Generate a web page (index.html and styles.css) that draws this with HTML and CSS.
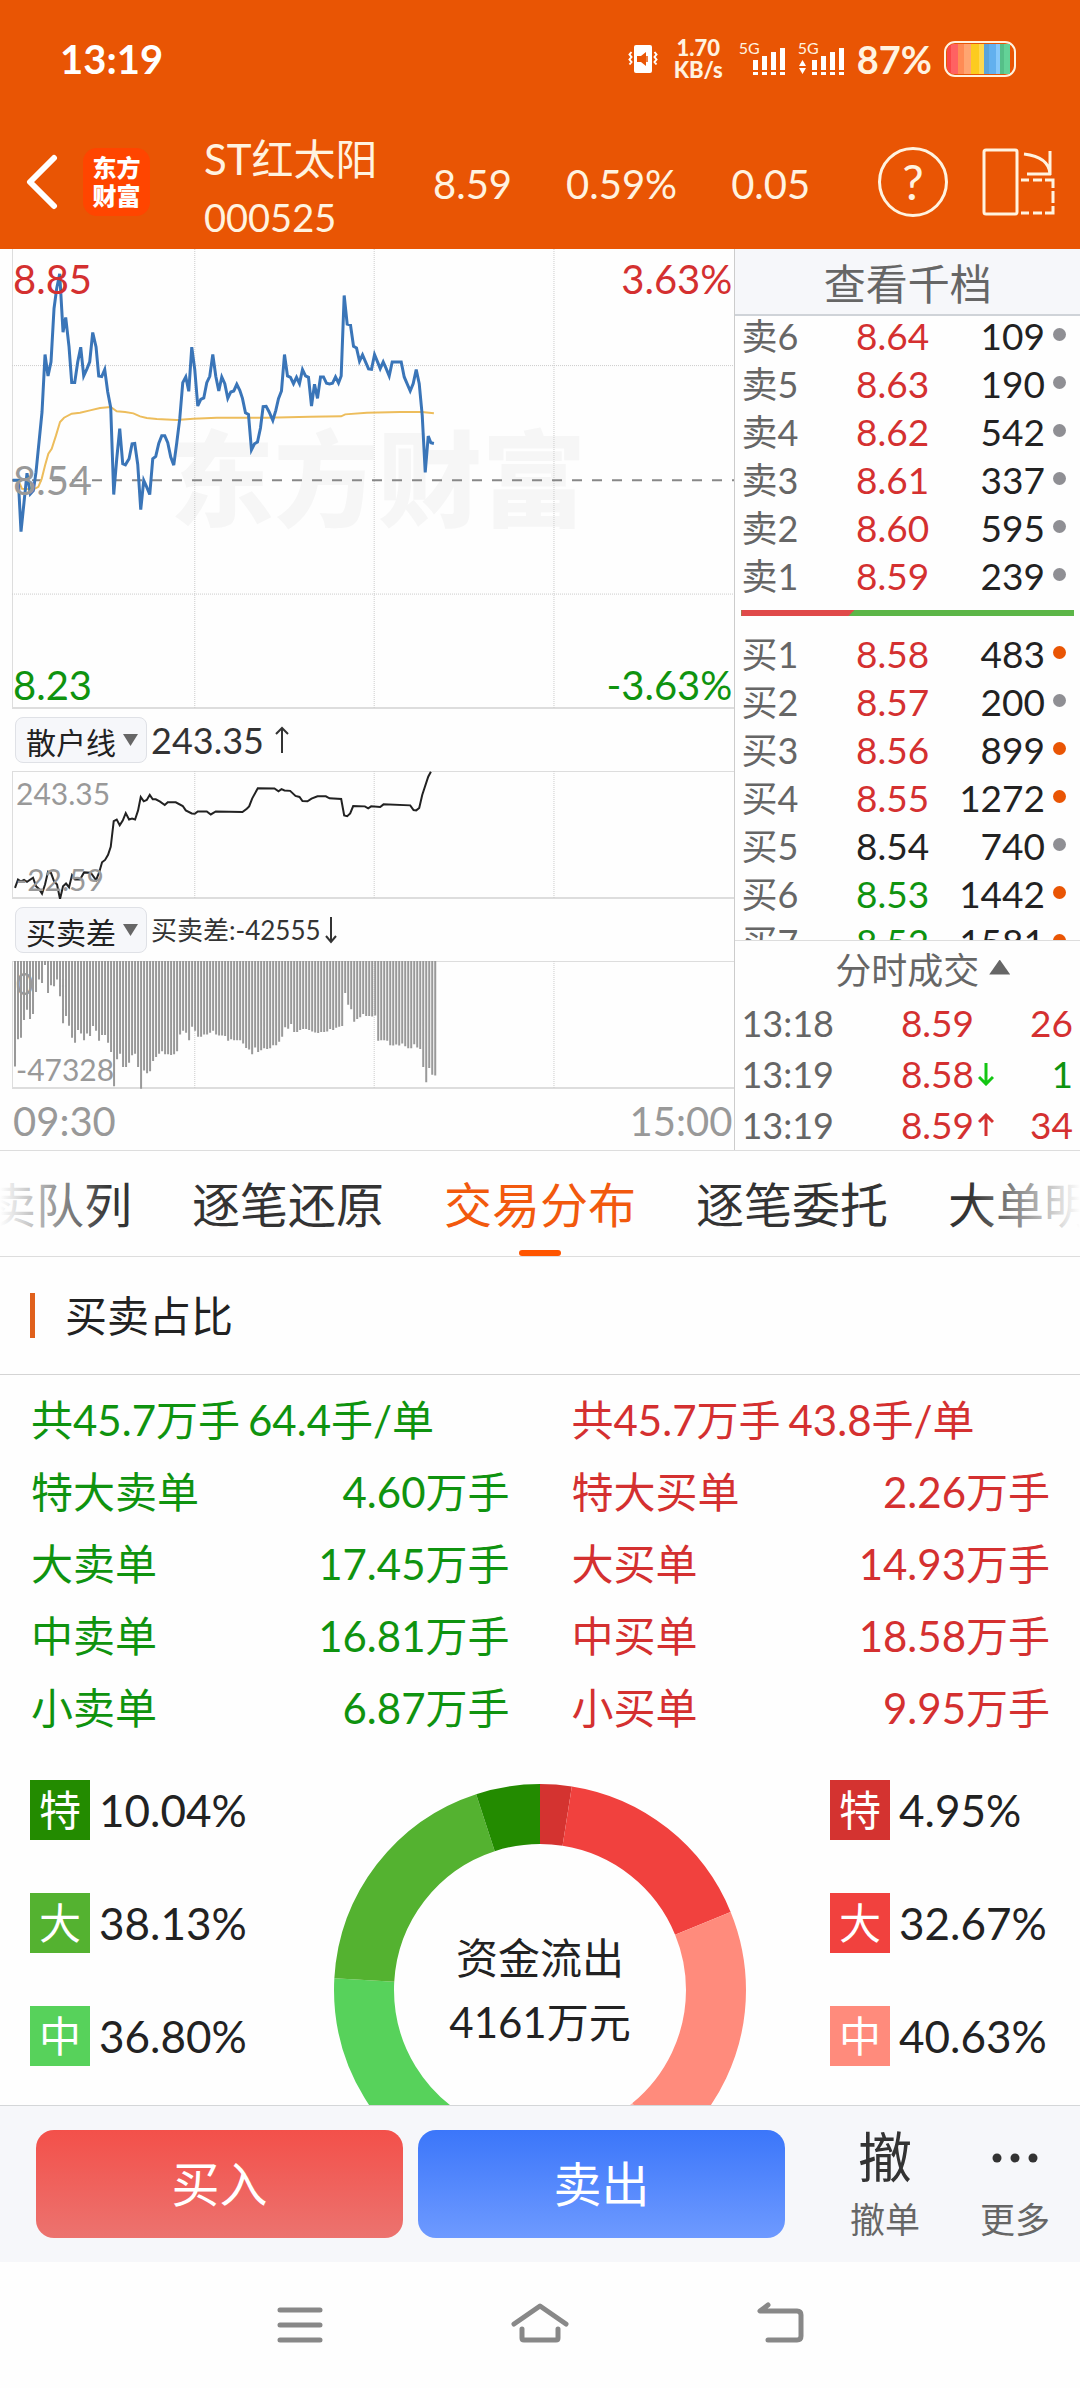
FILE: index.html
```html
<!DOCTYPE html>
<html lang="zh-CN">
<head>
<meta charset="utf-8">
<meta name="viewport" content="width=device-width, initial-scale=1">
<title>ST红太阳 000525</title>
<link rel="stylesheet" href="styles.css">
</head>

<body>
<header class="top">
  <div class="status">
    <span class="clock">13:19</span>
    <div class="status-icons">
      <svg class="vibrate" width="30" height="28" viewBox="0 0 30 28">
        <rect x="6" y="0" width="18" height="28" rx="2" fill="#fff"/>
        <path d="M9 11h4l5-4v14l-5-4h-4z" fill="#e95504"/>
        <path d="M19 11v6" stroke="#e95504" stroke-width="1.5"/>
        <path d="M3.500 7l-2 2.500 2 2.500-2 2.500 2 2.500-2 2.500M26.500 7l2 2.500-2 2.500 2 2.500-2 2.500 2 2.500" fill="none" stroke="#fff" stroke-width="2"/>
      </svg>
      <span class="speed">1.70<br>KB/s</span>
      <span class="signal">
        <span class="net">5G</span>
        <svg width="46" height="34" viewBox="0 0 46 34" fill="#fff">
          <path d="M14 18h5v10h-5zM23 14h5v14h-5zM32 10h5v18h-5zM41 6h5v22h-5zM14 30h5v3h-5zM23 30h5v3h-5zM32 30h5v3h-5zM41 30h5v3h-5z"/>
        </svg>
      </span>
      <span class="signal">
        <span class="net">5G</span>
        <svg width="46" height="34" viewBox="0 0 46 34" fill="#fff">
          <path d="M14 18h5v10h-5zM23 14h5v14h-5zM32 10h5v18h-5zM41 6h5v22h-5zM14 30h5v3h-5zM23 30h5v3h-5zM32 30h5v3h-5zM41 30h5v3h-5z"/>
          <path d="M4.500 18l3.500 6h-7zM4.500 32l3.500-6h-7z"/>
        </svg>
      </span>
      <span class="percent">87%</span>
      <span class="battery"><span class="charge"></span></span>
    </div>
  </div>

  <div class="titlebar">
    <button class="icon-btn" aria-label="返回">
      <svg width="32" height="56" viewBox="0 0 32 56" fill="none" stroke="#fff" stroke-width="6" stroke-linecap="round" stroke-linejoin="round"><path d="M28 4L4 28l24 24"/></svg>
    </button>
    <span class="logo">东方<br>财富</span>
    <div class="stock">
      <h1>ST红太阳</h1>
      <span>000525</span>
    </div>
    <div class="quote">
      <span>8.59</span>
      <span>0.59%</span>
      <span>0.05</span>
    </div>
    <div class="actions">
      <button class="icon-btn help" aria-label="帮助">?</button>
      <button class="icon-btn" aria-label="横屏">
        <svg width="73" height="70" viewBox="0 0 73 70" fill="none" stroke="#fff3e0" stroke-width="3">
          <rect x="2" y="3" width="33" height="64" rx="2"/>
          <path d="M42 7q25 3 26 20M68 4v24M45 27h24"/>
          <path d="M39 33h8M51 33h9M63 33h8v8M71 44v12M71 59v7h-8M60 66h-9M47 66h-8"/>
        </svg>
      </button>
    </div>
  </div>
</header>

<main class="market">
  <section class="charts">
    <div class="plot price">
      <span class="watermark">东方财富</span>
      <svg viewBox="0 12 2202 1377" preserveAspectRatio="none">
        <g class="grid">
          <path d="M36 361H2202M36 1045H2202"/>
          <path d="M584 12V1389M1122 12V1389M1661 12V1389"/>
        </g>
        <path class="base" d="M36 704H2202"/>
        <polyline class="avg" points="38,704 55,704 66,730 100,732 115,724 125,700 135,660 145,625 155,610 168,570 180,530 192,517 215,505 240,502 270,495 300,488 332,485 350,498 375,500 400,504 420,513 440,518 470,521 530,524 580,520 650,517 800,517 930,514 1023,513 1035,507 1100,502 1200,500 1265,500 1301,504"/>
        <polyline class="now" points="38,704 55,704 63,858 81,683 91,745 100,735 108,680 126,500 135,328 144,392 153,350 162,190 170,130 179,86 189,261 197,217 207,305 215,412 224,412 233,350 242,306 251,392 261,370 269,350 278,262 288,305 296,392 305,394 314,373 323,440 332,487 341,747 350,640 359,550 368,655 376,658 387,640 396,595 404,594 413,657 422,792 431,705 440,725 449,747 458,640 467,633 476,594 485,571 494,571 503,592 512,635 521,659 530,592 539,520 548,412 557,395 566,438 575,306 584,373 593,482 602,462 611,458 620,412 629,393 638,328 647,393 656,437 665,395 674,415 683,459 692,440 701,437 710,417 719,435 727,459 736,502 745,507 754,613 763,595 772,590 781,548 789,484 798,483 807,500 818,525 827,495 835,460 844,437 853,328 862,392 871,396 880,415 889,396 898,415 907,373 916,392 925,396 934,482 943,417 952,459 961,395 970,395 979,414 988,416 997,414 1006,395 1015,413 1023,392 1032,151 1041,237 1051,240 1060,303 1069,308 1078,348 1087,329 1096,350 1105,371 1114,372 1123,328 1132,350 1140,370 1149,350 1158,370 1167,392 1176,350 1203,350 1212,395 1230,437 1239,415 1248,373 1257,415 1266,510 1275,681 1284,572 1292,592 1301,594"/>
      </svg>
      <span class="mark top-left up">8.85</span>
      <span class="mark top-right up">3.63%</span>
      <span class="mark mid-left">8.54</span>
      <span class="mark bottom-left down">8.23</span>
      <span class="mark bottom-right down">-3.63%</span>
    </div>

    <div class="indicator">
      <span class="picker"><select aria-label="指标一"><option>散户线</option></select></span>
      <span class="reading">243.35<svg width="16" height="28" viewBox="0 0 16 28"><path d="M8 27V2M2 8l6-6 6 6"/></svg></span>
    </div>
    <div class="plot sub">
      <svg viewBox="0 213 2202 380" preserveAspectRatio="none">
        <g class="grid"><path d="M584 213V593M1122 213V593M1661 213V593"/></g>
        <polyline class="retail" points="45,560 54,535 63,541 72,536 81,542 99,530 108,555 117,563 126,577 135,550 144,512 153,516 162,540 171,550 180,593 189,555 198,547 207,558 216,522 225,535 240,535 252,514 272,515 288,537 297,515 306,484 315,477 324,462 332,438 341,362 350,357 359,374 368,360 377,338 387,357 396,354 405,357 414,330 422,290 431,303 440,299 449,284 458,297 467,297 480,304 494,314 503,306 527,306 548,317 557,330 575,339 584,340 593,333 620,333 632,342 647,333 727,335 740,325 747,318 756,295 773,264 823,265 835,273 844,267 853,271 870,272 886,287 898,290 907,302 922,303 934,295 952,288 977,288 988,294 1023,296 1032,345 1041,347 1050,339 1059,317 1094,318 1104,324 1113,318 1140,320 1150,312 1230,315 1240,329 1248,330 1257,323 1266,284 1284,230 1292,215"/>
      </svg>
      <span class="mark small top-left">243.35</span>
      <span class="mark small bottom-left">-22.59</span>
    </div>

    <div class="indicator">
      <span class="picker"><select aria-label="指标二"><option>买卖差</option></select></span>
      <span class="reading narrow">买卖差:-42555<svg width="12" height="28" viewBox="0 0 12 28"><path d="M6 1v25M1 20l5 6 5-6"/></svg></span>
    </div>
    <div class="plot sub">
      <svg viewBox="0 785 2202 380" preserveAspectRatio="none">
        <g class="grid"><path d="M584 785V1165M1122 785V1165M1661 785V1165"/></g>
        <path class="bars" id="bars"/>
      </svg>
      <span class="mark small top-left">0</span>
      <span class="mark small bottom-left">-47328</span>
    </div>
    <div class="axis"><span>09:30</span><span>15:00</span></div>
  </section>

  <aside class="book">
    <button class="depth">查看千档</button>
    <div class="levels">
      <table>
        <tr><th>卖6</th><td class="up">8.64</td><td>109</td><td><i></i></td></tr>
        <tr><th>卖5</th><td class="up">8.63</td><td>190</td><td><i></i></td></tr>
        <tr><th>卖4</th><td class="up">8.62</td><td>542</td><td><i></i></td></tr>
        <tr><th>卖3</th><td class="up">8.61</td><td>337</td><td><i></i></td></tr>
        <tr><th>卖2</th><td class="up">8.60</td><td>595</td><td><i></i></td></tr>
        <tr><th>卖1</th><td class="up">8.59</td><td>239</td><td><i></i></td></tr>
      </table>
      <div class="balance"><span style="width: 34%"></span></div>
      <table>
        <tr><th>买1</th><td class="up">8.58</td><td>483</td><td><i class="hot"></i></td></tr>
        <tr><th>买2</th><td class="up">8.57</td><td>200</td><td><i></i></td></tr>
        <tr><th>买3</th><td class="up">8.56</td><td>899</td><td><i class="hot"></i></td></tr>
        <tr><th>买4</th><td class="up">8.55</td><td>1272</td><td><i class="hot"></i></td></tr>
        <tr><th>买5</th><td>8.54</td><td>740</td><td><i></i></td></tr>
        <tr><th>买6</th><td class="down">8.53</td><td>1442</td><td><i class="hot"></i></td></tr>
        <tr><th>买7</th><td class="down">8.52</td><td>1581</td><td><i class="hot"></i></td></tr>
      </table>
    </div>
    <div class="trades">
      <button class="trades-head">分时成交<span class="caret"></span></button>
      <table>
        <tr><th>13:18</th><td class="up">8.59</td><td class="arrow"></td><td class="up">26</td></tr>
        <tr><th>13:19</th><td class="up">8.58</td><td class="arrow fall"><svg width="16" height="24" viewBox="0 0 16 24"><path d="M8 1v20M1 15l7 7 7-7"/></svg></td><td class="down">1</td></tr>
        <tr><th>13:19</th><td class="up">8.59</td><td class="arrow rise"><svg width="16" height="24" viewBox="0 0 16 24"><path d="M8 23V3M1 9l7-7 7 7"/></svg></td><td class="up">34</td></tr>
      </table>
    </div>
  </aside>
</main>

<nav class="tabs">
  <a href="#">买卖队列</a>
  <a href="#">逐笔还原</a>
  <a href="#" class="active">交易分布</a>
  <a href="#">逐笔委托</a>
  <a href="#">大单明细</a>
</nav>

<section class="ratio">
  <h2>买卖占比</h2>
  <div class="totals">
    <dl class="down">
      <div class="sum"><dt>共45.7万手</dt><dd>64.4手/单</dd></div>
      <div><dt>特大卖单</dt><dd>4.60万手</dd></div>
      <div><dt>大卖单</dt><dd>17.45万手</dd></div>
      <div><dt>中卖单</dt><dd>16.81万手</dd></div>
      <div><dt>小卖单</dt><dd>6.87万手</dd></div>
    </dl>
    <dl class="up">
      <div class="sum"><dt>共45.7万手</dt><dd>43.8手/单</dd></div>
      <div><dt>特大买单</dt><dd>2.26万手</dd></div>
      <div><dt>大买单</dt><dd>14.93万手</dd></div>
      <div><dt>中买单</dt><dd>18.58万手</dd></div>
      <div><dt>小买单</dt><dd>9.95万手</dd></div>
    </dl>
  </div>

  <div class="share">
    <ul class="legend">
      <li><b class="g1">特</b>10.04%</li>
      <li><b class="g2">大</b>38.13%</li>
      <li><b class="g3">中</b>36.80%</li>
    </ul>
    <div class="donut">
      <!-- pathLength 200: each side of the ring adds up to 100% -->
      <svg width="412" height="412" viewBox="0 0 412 412">
        <g fill="none" stroke-width="60" transform="rotate(-90 206 206)">
          <circle cx="206" cy="206" r="176" pathLength="200" stroke="#d43330" stroke-dasharray="4.95 200"/>
          <circle cx="206" cy="206" r="176" pathLength="200" stroke="#f1413e" stroke-dasharray="32.67 200" stroke-dashoffset="-4.95"/>
          <circle cx="206" cy="206" r="176" pathLength="200" stroke="#ff8b7c" stroke-dasharray="40.63 200" stroke-dashoffset="-37.62"/>
          <circle cx="206" cy="206" r="176" pathLength="200" stroke="#ffb9ae" stroke-dasharray="21.75 200" stroke-dashoffset="-78.25"/>
          <circle cx="206" cy="206" r="176" pathLength="200" stroke="#9be79c" stroke-dasharray="15.03 200" stroke-dashoffset="-100"/>
          <circle cx="206" cy="206" r="176" pathLength="200" stroke="#57d25b" stroke-dasharray="36.8 200" stroke-dashoffset="-115.03"/>
          <circle cx="206" cy="206" r="176" pathLength="200" stroke="#54b230" stroke-dasharray="38.13 200" stroke-dashoffset="-151.83"/>
          <circle cx="206" cy="206" r="176" pathLength="200" stroke="#238b00" stroke-dasharray="10.04 200" stroke-dashoffset="-189.96"/>
        </g>
      </svg>
      <p>资金流出<br>4161万元</p>
    </div>
    <ul class="legend">
      <li><b class="r1">特</b>4.95%</li>
      <li><b class="r2">大</b>32.67%</li>
      <li><b class="r3">中</b>40.63%</li>
    </ul>
  </div>
</section>

<footer class="trade-bar">
  <button class="buy">买入</button>
  <button class="sell">卖出</button>
  <button class="tool"><span class="glyph">撤</span>撤单</button>
  <button class="tool"><span class="glyph"><svg width="48" height="12" viewBox="0 0 48 12" fill="#333"><circle cx="6" cy="6" r="4.500"/><circle cx="24" cy="6" r="4.500"/><circle cx="42" cy="6" r="4.500"/></svg></span>更多</button>
</footer>

<nav class="system">
  <button class="icon-btn" aria-label="最近任务">
    <svg width="60" height="48" viewBox="0 0 60 48"><path d="M10 9h40M10 24h40M10 39h40"/></svg>
  </button>
  <button class="icon-btn" aria-label="主屏幕">
    <svg width="60" height="48" viewBox="0 0 60 48"><path d="M4 23L30 5l26 18" /><path d="M12 28v9q0 2 2 2h32q2 0 2-2v-9"/></svg>
  </button>
  <button class="icon-btn" aria-label="返回上级">
    <svg width="60" height="48" viewBox="0 0 60 48"><path d="M18 4l-8 6h37q4 0 4 4v21q0 4-4 4H18"/></svg>
  </button>
</nav>

<script src="bars.js"></script>
</body>
</html>
```

FILE: styles.css
```css
* {
  box-sizing: border-box;
}

body {
  margin: 0;
  height: 100vh;
  display: flex;
  flex-direction: column;
  background: #fefefe;
  color: #222;
  font-family: Lato, "Noto Sans CJK SC", sans-serif;
  font-size: 42px;
  line-height: 48px;
}

button,
select {
  font: inherit;
  color: inherit;
  border: 0;
  padding: 0;
  background: none;
}

h1, h2, p, dl, dd, ul {
  margin: 0;
  padding: 0;
  font-weight: normal;
}

table {
  width: 100%;
  border-collapse: collapse;
}

th, td {
  padding: 0;
  font-weight: normal;
}

.up { color: #d43030; }
.down { color: #0f930f; }

.icon-btn {
  display: flex;
  align-items: center;
  justify-content: center;
}

/* header */

.top {
  flex: none;
  height: 249px;
  background: #e95504;
  color: #fff3e0;
}

.status {
  display: flex;
  align-items: center;
  justify-content: space-between;
  height: 118px;
  padding: 0 64px 0 60px;
}

.clock {
  color: #fff;
  font-size: 40px;
  font-weight: bold;
}

.status-icons {
  display: flex;
  align-items: center;
}

.speed {
  margin: 0 16px 0 16px;
  font-size: 22px;
  font-weight: 900;
  line-height: 22px;
  text-align: center;
}

.signal {
  position: relative;
  margin-right: 13px;
  height: 34px;
}

.signal svg {
  display: block;
}

.net {
  position: absolute;
  left: 0;
  top: -2px;
  font-size: 16px;
  line-height: 16px;
}

.percent {
  margin-right: 12px;
  font-size: 38px;
  font-weight: bold;
}

.battery {
  width: 72px;
  height: 36px;
  padding: 1px 4px 1px 1px;
  border: 2px solid #fff3e0;
  border-radius: 11px;
}

.charge {
  display: block;
  height: 100%;
  border-radius: 7px 0 0 7px;
  background: linear-gradient(90deg, #fb4848 0 6%, #ff6262 6% 18%, #ff8b55 18% 27%, #ffa571 27% 38%, #fccb1f 38% 51%, #ffd84f 51% 58%, #5ba3da 58% 66%, #62b0ee 66% 78%, #86c8fa 78% 84%, #55bf88 84% 91%, #63d297 91%);
}

.titlebar {
  display: flex;
  align-items: center;
  height: 127px;
  padding: 0 25px 0 26px;
}

.logo {
  display: flex;
  align-items: center;
  justify-content: center;
  width: 67px;
  height: 68px;
  margin-left: 25px;
  border-radius: 14px;
  background: #ff4500;
  color: #fff;
  font-size: 24px;
  font-weight: 900;
  line-height: 28px;
}

.stock {
  flex: 0 1 229px;
  margin-left: 54px;
  padding-top: 12px;
  font-size: 38px;
  line-height: 58px;
}

.stock h1 {
  font-size: 42px;
  line-height: 58px;
}

.stock span {
  display: block;
}

.quote {
  display: flex;
  gap: 54px;
  padding-top: 4px;
  font-size: 40px;
}

.actions {
  display: flex;
  align-items: center;
  gap: 34px;
  margin-left: auto;
}

.help {
  width: 70px;
  height: 70px;
  border: 3px solid #fff3e0;
  border-radius: 50%;
  font-size: 48px;
}

/* charts and order book */

.market {
  flex: none;
  display: grid;
  grid-template-columns: 68% 1fr;
  height: 902px;
  border-bottom: 1px solid #ddd;
}

.charts {
  display: flex;
  flex-direction: column;
  font-size: 40px;
}

.plot {
  position: relative;
}

.plot::before {
  content: "";
  position: absolute;
  inset: 0 0 0 12px;
  border-left: 1px solid #ddd;
  border-bottom: 2px solid #ddd;
}

.plot svg {
  position: relative;
  display: block;
  width: 100%;
  height: 100%;
}

.plot path,
.plot polyline {
  fill: none;
  vector-effect: non-scaling-stroke;
}

.price {
  height: 460px;
}

.sub {
  height: 128px;
}

.sub::before {
  border-top: 1px solid #ddd;
}

.grid path {
  stroke: #ccc;
  stroke-width: 1;
  stroke-dasharray: 1 1;
}

.base {
  stroke: #888;
  stroke-width: 2;
  stroke-dasharray: 10 10;
}

.avg {
  stroke: #edbd5c;
  stroke-width: 2;
}

.now {
  stroke: #3a75b8;
  stroke-width: 3;
}

.retail {
  stroke: #222;
  stroke-width: 2;
}

.bars {
  stroke: #999;
  stroke-width: 2;
}

.watermark {
  position: absolute;
  top: 160px;
  left: 170px;
  color: #f6f6f6;
  font-size: 104px;
  font-weight: 900;
  line-height: 140px;
}

.mark {
  position: absolute;
}

.mark.small {
  font-size: 30px;
  line-height: 40px;
}

.mid-left,
.small,
.axis {
  color: #999;
}

.top-left { top: 6px; left: 13px; }
.top-right { top: 6px; right: 2px; }
.mid-left { top: 207px; left: 13px; }
.bottom-left { bottom: 0; left: 13px; }
.bottom-right { bottom: 0; right: 2px; }
.small.top-left,
.small.bottom-left { left: 16px; }
.small.top-left { top: 2px; }

.indicator {
  display: flex;
  align-items: center;
  gap: 4px;
  height: 62px;
  padding-left: 15px;
}

.picker {
  position: relative;
}

.picker select {
  appearance: none;
  display: block;
  width: 132px;
  height: 46px;
  padding: 0 0 3px 10px;
  border: 1px solid #dfe1e6;
  border-radius: 8px;
  background: #f6f7fa;
  font-size: 30px;
}

.picker::after {
  content: "";
  position: absolute;
  right: 9px;
  top: 17px;
  width: 15px;
  height: 12px;
  background: #666;
  clip-path: polygon(0 0, 100% 0, 50% 100%);
  pointer-events: none;
}

.reading {
  display: flex;
  align-items: center;
  gap: 10px;
  color: #333;
  font-size: 36px;
}

.reading.narrow {
  gap: 4px;
  font-size: 26px;
}

.reading path {
  fill: none;
  stroke: #333;
  stroke-width: 2;
}

.axis {
  display: flex;
  justify-content: space-between;
  align-items: center;
  flex: 1;
  padding: 2px 2px 0 13px;
}

.book {
  display: flex;
  flex-direction: column;
  min-height: 0;
  border-left: 1px solid #ccc;
  font-size: 37px;
}

.depth {
  flex: none;
  height: 67px;
  padding-top: 4px;
  border-bottom: 2px solid #cfd3d8;
  background: #f6f7fa;
  color: #666;
  font-size: 42px;
}

/* the list rests slightly scrolled, so both ends are cut */
.levels {
  flex: 1;
  display: flex;
  flex-direction: column;
  min-height: 0;
  margin-top: -4px;
  overflow: hidden;
}

.book tr {
  height: 48px;
}

.book th {
  padding-left: 6px;
  text-align: left;
  color: #666;
  font-size: 36px;
}

.book td {
  text-align: right;
}

.levels th { width: 35%; }
.levels td:nth-child(2) { width: 21%; }
.levels td:last-child { width: 35px; }

.levels table {
  table-layout: fixed;
}

.levels i {
  display: block;
  width: 13px;
  height: 13px;
  margin: 0 auto 4px 8px;
  border-radius: 50%;
  background: #8f8f94;
}

.levels i.hot {
  background: #e95504;
}

.balance {
  flex: none;
  height: 6px;
  margin: 10px 6px 14px;
  background: #5cb648;
}

.balance span {
  display: block;
  height: 100%;
  background: #e04a4a;
  clip-path: polygon(0 0, 100% 0, calc(100% - 6px) 100%, 0 100%);
}

.trades {
  flex: none;
  height: 210px;
  border-top: 1px solid #ddd;
}

.trades-head {
  display: flex;
  align-items: center;
  justify-content: center;
  gap: 10px;
  width: 100%;
  height: 56px;
  padding: 2px 0 0 30px;
  color: #666;
  font-size: 36px;
}

.caret {
  width: 21px;
  height: 15px;
  margin-bottom: 6px;
  background: #666;
  clip-path: polygon(50% 0, 100% 100%, 0 100%);
}

.trades table {
  table-layout: fixed;
}

.trades tr {
  height: 51px;
}

.trades th {
  width: 110px;
}

.trades td:nth-child(3) {
  width: 24px;
}

.trades td:last-child {
  width: 82px;
  padding-right: 7px;
}

.arrow svg {
  display: block;
  margin-left: 4px;
  fill: none;
  stroke-width: 3;
}

.fall svg { stroke: #13c613; }
.rise svg { stroke: #d43030; }

/* tabs */

.tabs {
  flex: none;
  position: relative;
  display: flex;
  justify-content: center;
  gap: 60px;
  height: 106px;
  overflow: hidden;
  border-bottom: 1px solid #ddd;
}

.tabs::after {
  content: "";
  position: absolute;
  inset: 0;
  background: linear-gradient(90deg, #fefefe, #fefefe00 110px, #fefefe00 calc(100% - 110px), #fefefe);
  pointer-events: none;
}

.tabs a {
  flex: none;
  position: relative;
  color: #333;
  font-size: 48px;
  line-height: 108px;
  text-decoration: none;
}

.tabs .active {
  color: #f2590d;
}

.active::after {
  content: "";
  position: absolute;
  left: 50%;
  bottom: 0;
  width: 42px;
  height: 6px;
  margin-left: -21px;
  border-radius: 3px;
  background: #ff5500;
}

/* buy and sell shares */

.ratio {
  flex: 1;
  display: flex;
  flex-direction: column;
  min-height: 0;
  overflow: hidden;
}

.ratio h2 {
  flex: none;
  display: flex;
  align-items: center;
  gap: 30px;
  height: 118px;
  padding-left: 30px;
  border-bottom: 1px solid #d4d4d4;
  font-size: 42px;
}

.ratio h2::before {
  content: "";
  width: 5px;
  height: 45px;
  background: #e0601c;
}

.totals {
  flex: none;
  display: grid;
  grid-template-columns: 1fr 1fr;
  gap: 62px;
  padding: 9px 30px 0 31px;
}

.totals dl div {
  display: flex;
  justify-content: space-between;
  line-height: 72px;
}

.totals dl .sum {
  justify-content: flex-start;
  gap: 8px;
}

.share {
  display: grid;
  grid-template-columns: 1fr 412px 1fr;
  padding: 40px 30px 0;
}

.legend {
  display: flex;
  flex-direction: column;
  gap: 53px;
  margin-top: -4px;
  list-style: none;
}

.legend:last-child {
  justify-self: end;
  width: 220px;
}

.legend li {
  display: flex;
  align-items: center;
  gap: 9px;
  height: 60px;
  font-size: 44px;
}

.legend b {
  width: 60px;
  color: #fff;
  font-size: 42px;
  font-weight: normal;
  line-height: 60px;
  text-align: center;
}

.g1 { background: #238b00; }
.g2 { background: #54b230; }
.g3 { background: #57d25b; }
.r1 { background: #d43330; }
.r2 { background: #f1413e; }
.r3 { background: #ff8b7c; }

.donut {
  display: grid;
  place-items: center;
}

.donut svg,
.donut p {
  grid-area: 1 / 1;
}

.donut p {
  line-height: 64px;
  text-align: center;
}

/* bottom bars */

.trade-bar {
  flex: none;
  display: flex;
  align-items: center;
  height: 157px;
  padding: 0 24px 0 36px;
  border-top: 1px solid #d4d6d8;
  background: #f6f7fa;
}

.buy,
.sell {
  flex: 1;
  height: 108px;
  margin-right: 15px;
  border-radius: 18px;
  color: #fff;
  font-size: 48px;
}

.buy { background: linear-gradient(#f3504a, #ec736f); }
.sell { background: linear-gradient(#3b76fa, #6e9aff); }

.tool {
  width: 82px;
  margin-left: 48px;
  color: #666;
  font-size: 35px;
  line-height: 48px;
}

.sell + .tool {
  margin-left: 44px;
}

.glyph {
  display: flex;
  align-items: center;
  justify-content: center;
  height: 66px;
  margin-bottom: 4px;
  color: #333;
  font-size: 54px;
}

.system {
  flex: none;
  display: flex;
  justify-content: center;
  gap: 180px;
  height: 126px;
}

.system svg {
  fill: none;
  stroke: #888;
  stroke-width: 5;
  stroke-linecap: round;
  stroke-linejoin: round;
}
```

FILE: bars.js
```js
// one value per minute since 09:30, as the lower end of each bar
var ends = [
  1098, 1017, 1013, 960, 930, 957, 942, 877, 840, 850, 797, 880, 857, 860, 840,
  890, 970, 948, 977, 1013, 1028, 990, 1000, 1020, 1000, 1008, 978, 992, 1022,
  1005, 1005, 1028, 1055, 1157, 1077, 1060, 1100, 1100, 1087, 1065, 1060, 1100,
  1164, 1110, 1118, 1112, 1082, 1070, 1060, 1053, 1062, 1062, 1064, 1062, 1053,
  1003, 992, 998, 1020, 980, 992, 1010, 1010, 1003, 1003, 998, 992, 1003, 1006,
  1006, 1008, 1022, 1017, 1020, 1020, 1020, 1030, 1043, 1048, 1062, 1042, 1055,
  1050, 1044, 1046, 1044, 1035, 1035, 1025, 1010, 982, 986, 972, 996, 996, 990,
  987, 987, 990, 994, 997, 999, 996, 996, 994, 987, 990, 983, 980, 978, 880,
  915, 928, 965, 957, 952, 942, 948, 948, 950, 947, 1022, 1020, 1020, 1022,
  1035, 1036, 1033, 1036, 1030, 1038, 1044, 1044, 1032, 1042, 1046, 1100, 1145,
  1103, 1123, 1125
];

var d = "";
for (var i = 0; i < ends.length; i++) {
  d += "M" + (45 + i * 9) + " 785V" + ends[i];
}
document.getElementById("bars").setAttribute("d", d);
```
